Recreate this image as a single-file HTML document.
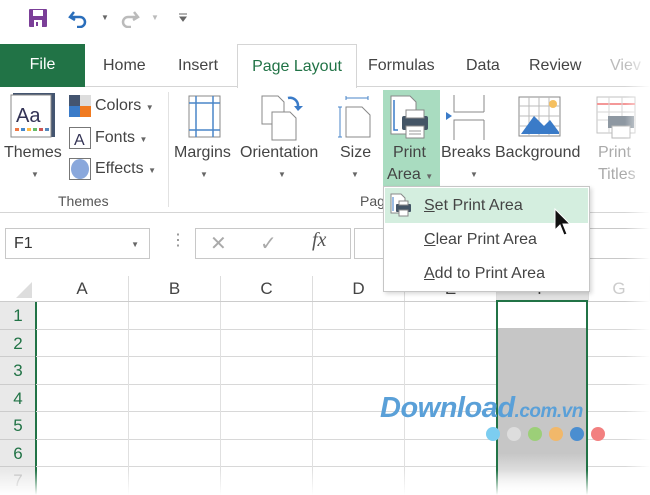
<!DOCTYPE html>
<html><head><meta charset="utf-8"><style>
*{margin:0;padding:0;box-sizing:border-box}
html,body{width:650px;height:495px;overflow:hidden}
body{background:#fff;font-family:"Liberation Sans",sans-serif;position:relative;color:#333}
.a{position:absolute;white-space:nowrap}
.t{font-size:16px;color:#444}
.l{font-size:16px;color:#444;text-align:center}
.arr{font-size:8px;color:#666}
.col{position:absolute;top:276px;height:26px;font-size:17px;color:#444;text-align:center;line-height:26px;border-right:1px solid #ddd;background:#fff}
.row{position:absolute;left:0;width:36px;font-size:17px;color:#555;text-align:center;background:#e9e9e9;border-bottom:1px solid #ccc}
.hl{position:absolute;left:36px;width:614px;height:1px;background:#d8d8d8}
.vl{position:absolute;width:1px;height:193px;background:#e0e0e0}
</style></head><body>
<svg class="a" style="left:28px;top:8px" width="20" height="20"><rect x="1" y="1" width="18" height="18" rx="1" fill="#7b3f98"/><rect x="5" y="2" width="10" height="6" fill="#fff"/><rect x="6" y="12" width="8" height="7" fill="#fff"/><rect x="8" y="14" width="2" height="4" fill="#7b3f98"/></svg>
<svg class="a" style="left:68px;top:8px" width="20" height="20"><path d="M6 4 L2 9 L7 12 M3 9 H12 A5 5 0 0 1 12 19 H9" fill="none" stroke="#2a6ebb" stroke-width="2.5"/></svg>
<span class="a arr" style="left:101px;top:13px">▼</span>
<svg class="a" style="left:120px;top:8px" width="20" height="20"><path d="M14 4 L18 9 L13 12 M17 9 H8 A5 5 0 0 0 8 19 H11" fill="none" stroke="#bbb" stroke-width="2.5"/></svg>
<span class="a arr" style="left:151px;top:13px;color:#bbb">▼</span>
<svg class="a" style="left:178px;top:12px" width="10" height="10"><path d="M1 2H9M2 5H8L5 9Z" fill="#666" stroke="#666"/></svg>
<div class="a" style="left:0;top:86px;width:650px;height:1px;background:#d5d5d5"></div>
<div class="a" style="left:0;top:44px;width:85px;height:43px;background:#217346;color:#fff;font-size:16px;text-align:center;line-height:42px">File</div>
<div class="a" style="left:237px;top:44px;width:120px;height:44px;border:1px solid #d5d5d5;border-bottom:none;background:#fff;color:#217346;font-size:16px;text-align:center;line-height:44px">Page Layout</div>
<span class="a t" style="left:103px;top:57px">Home</span>
<span class="a t" style="left:178px;top:57px">Insert</span>
<span class="a t" style="left:368px;top:57px">Formulas</span>
<span class="a t" style="left:466px;top:57px">Data</span>
<span class="a t" style="left:529px;top:57px">Review</span>
<span class="a t" style="left:610px;top:57px;color:#bbb">Viev</span>
<svg class="a" style="left:10px;top:92px" width="48" height="46"><rect x="3" y="1" width="42" height="44" fill="#445570"/><rect x="1" y="3" width="40" height="42" fill="#fff" stroke="#888"/><text x="6" y="30" font-size="20" fill="#335" font-family="Liberation Sans">Aa</text><g fill="#e74"><rect x="5" y="36" width="4" height="3"/><rect x="11" y="36" width="4" height="3" fill="#48c"/><rect x="17" y="36" width="4" height="3" fill="#fb4"/><rect x="23" y="36" width="4" height="3" fill="#6b6"/><rect x="29" y="36" width="4" height="3" fill="#c55"/><rect x="35" y="36" width="4" height="3" fill="#58b"/></g></svg>
<span class="a l" style="left:4px;top:144px">Themes</span>
<span class="a arr" style="left:31px;top:170px">▼</span>
<svg class="a" style="left:69px;top:95px" width="22" height="22"><rect x="0" y="0" width="11" height="11" fill="#445570"/><rect x="11" y="0" width="11" height="11" fill="#ddd"/><rect x="0" y="11" width="11" height="11" fill="#3a7bc8"/><rect x="11" y="11" width="11" height="11" fill="#f07a20"/></svg>
<span class="a t" style="left:95px;top:97px">Colors <span class="arr">▼</span></span>
<svg class="a" style="left:69px;top:127px" width="22" height="22"><rect x="0.5" y="0.5" width="21" height="21" fill="#fff" stroke="#777"/><text x="5" y="18" font-size="16" fill="#335" font-family="Liberation Sans">A</text></svg>
<span class="a t" style="left:95px;top:129px">Fonts <span class="arr">▼</span></span>
<svg class="a" style="left:69px;top:158px" width="22" height="22"><rect x="0.5" y="0.5" width="21" height="21" fill="#fff" stroke="#777"/><ellipse cx="11" cy="11" rx="9" ry="10" fill="#8aa8dc"/></svg>
<span class="a t" style="left:95px;top:160px">Effects <span class="arr">▼</span></span>
<span class="a" style="left:58px;top:193px;font-size:14px;color:#555">Themes</span>
<div class="a" style="left:168px;top:92px;width:1px;height:115px;background:#e2e2e2"></div>
<svg class="a" style="left:188px;top:95px" width="34" height="44"><rect x="1" y="1" width="31" height="41" fill="#fff" stroke="#888"/><path d="M8 1V42M25 1V42M1 8H32M1 35H32" stroke="#4a86c8" stroke-width="1.5"/></svg>
<span class="a l" style="left:174px;top:144px">Margins</span>
<span class="a arr" style="left:200px;top:170px">▼</span>
<svg class="a" style="left:260px;top:94px" width="46" height="48"><path d="M2 2H18L24 8V30H2Z" fill="#fff" stroke="#888"/><path d="M12 18H30L36 24V46H12Z" fill="#fff" stroke="#888"/><path d="M28 4 A8 8 0 0 1 38 12" fill="none" stroke="#3a7bc8" stroke-width="2.5"/><path d="M34 12 L38 17 L43 12Z" fill="#3a7bc8"/></svg>
<span class="a l" style="left:240px;top:144px">Orientation</span>
<span class="a arr" style="left:278px;top:170px">▼</span>
<svg class="a" style="left:338px;top:95px" width="36" height="44"><path d="M8 3H30M8 1V5M30 1V5M2 12V42M0 12H4M0 42H4" stroke="#4a86c8"/><path d="M8 12H24L32 20V42H8Z" fill="#fff" stroke="#888"/></svg>
<span class="a l" style="left:340px;top:144px">Size</span>
<span class="a arr" style="left:351px;top:170px">▼</span>
<div class="a" style="left:383px;top:90px;width:57px;height:96px;background:#a9dcc0"></div>
<svg class="a" style="left:388px;top:94px" width="46" height="46"><path d="M3 2H22L28 8V40H3Z" fill="#fff" stroke="#888"/><path d="M6 6V36H10" fill="none" stroke="#3a7bc8" stroke-width="1.5"/><rect x="14" y="22" width="26" height="14" rx="2" fill="#445566"/><rect x="18" y="16" width="18" height="8" fill="#fff" stroke="#888"/><rect x="18" y="32" width="18" height="12" fill="#fff" stroke="#888"/><path d="M21 37H33M21 40H33" stroke="#999"/></svg>
<span class="a l" style="left:393px;top:144px">Print</span>
<span class="a l" style="left:387px;top:166px">Area <span class="arr">▼</span></span>
<svg class="a" style="left:444px;top:94px" width="42" height="46"><path d="M10 1V18H40M10 46V26H40M40 1V18M40 26V46" fill="none" stroke="#888"/><path d="M2 18L8 22L2 26Z" fill="#3a7bc8"/></svg>
<span class="a l" style="left:441px;top:144px">Breaks</span>
<span class="a arr" style="left:470px;top:170px">▼</span>
<svg class="a" style="left:518px;top:96px" width="44" height="42"><rect x="1" y="1" width="41" height="39" fill="#fff" stroke="#888"/><path d="M1 10H42M1 20H42M1 30H42M11 1V40M21 1V40M31 1V40" stroke="#bbb"/><path d="M3 38L16 20L26 30L32 24L41 36V38Z" fill="#3a7bc8"/><circle cx="35" cy="8" r="4" fill="#f5c060"/></svg>
<span class="a l" style="left:495px;top:144px">Background</span>
<svg class="a" style="left:596px;top:96px" width="40" height="46" opacity="0.6"><rect x="1" y="1" width="38" height="36" fill="#fff" stroke="#999"/><path d="M1 8H39" stroke="#e55" stroke-width="2"/><path d="M1 16H39M1 24H39M13 1V37M26 1V37" stroke="#bbb"/><rect x="12" y="20" width="26" height="12" fill="#445566"/><rect x="16" y="30" width="18" height="12" fill="#fff" stroke="#888"/></svg>
<span class="a l" style="left:598px;top:144px;color:#aaa">Print</span>
<span class="a l" style="left:598px;top:166px;color:#aaa">Titles</span>
<span class="a" style="left:360px;top:193px;font-size:14px;color:#555">Pag</span>
<div class="a" style="left:0;top:212px;width:650px;height:1px;background:#d5d5d5"></div>
<div class="a" style="left:5px;top:228px;width:145px;height:31px;border:1px solid #c8c8c8;font-size:16px;color:#333;padding:6px 0 0 8px">F1<span class="arr" style="position:absolute;right:10px;top:11px">▼</span></div>
<span class="a" style="left:170px;top:230px;color:#888;font-size:16px">⋮</span>
<div class="a" style="left:195px;top:228px;width:156px;height:31px;border:1px solid #c8c8c8"></div>
<span class="a" style="left:210px;top:231px;font-size:20px;color:#aaa">✕</span>
<span class="a" style="left:260px;top:231px;font-size:20px;color:#aaa">✓</span>
<span class="a" style="left:312px;top:229px;font-size:20px;font-family:'Liberation Serif',serif;font-style:italic;color:#555">fx</span>
<div class="a" style="left:354px;top:228px;width:296px;height:31px;border:1px solid #c8c8c8;border-right:none"></div>
<div class="a" style="left:0;top:276px;width:36px;height:26px;background:#fff"></div>
<svg class="a" style="left:10px;top:280px" width="24" height="20"><path d="M22 2V18H6Z" fill="#ddd"/></svg>
<div class="col" style="left:36px;width:93px">A</div>
<div class="col" style="left:129px;width:92px">B</div>
<div class="col" style="left:221px;width:92px">C</div>
<div class="col" style="left:313px;width:92px">D</div>
<div class="col" style="left:405px;width:92px">E</div>
<div class="col" style="left:497px;width:92px;background:#e2e2e2">F</div>
<div class="col" style="left:589px;width:61px;color:#ccc">G</div>
<div class="a" style="left:0;top:301px;width:650px;height:1px;background:#ccc"></div>
<div class="row" style="top:302px;height:28px;line-height:28px;color:#217346">1</div>
<div class="row" style="top:330px;height:27px;line-height:27px;color:#217346">2</div>
<div class="row" style="top:357px;height:28px;line-height:28px;color:#217346">3</div>
<div class="row" style="top:385px;height:27px;line-height:27px;color:#217346">4</div>
<div class="row" style="top:412px;height:28px;line-height:28px;color:#217346">5</div>
<div class="row" style="top:440px;height:27px;line-height:27px;color:#217346">6</div>
<div class="row" style="top:467px;height:28px;line-height:28px;color:#bbb">7</div>
<div class="a" style="left:35px;top:302px;width:2px;height:193px;background:#217346"></div>
<div class="hl" style="top:329px"></div><div class="hl" style="top:356px"></div><div class="hl" style="top:384px"></div><div class="hl" style="top:411px"></div><div class="hl" style="top:439px"></div><div class="hl" style="top:466px"></div>
<div class="vl" style="left:128px;top:302px"></div><div class="vl" style="left:220px;top:302px"></div><div class="vl" style="left:312px;top:302px"></div><div class="vl" style="left:404px;top:302px"></div>
<div class="a" style="left:498px;top:328px;width:89px;height:167px;background:linear-gradient(#c6c6c6 75%,#fff)"></div>
<div class="a" style="left:496px;top:300px;width:92px;height:195px;border:2px solid #217346;border-bottom:none"></div>
<span class="a" style="left:380px;top:392px;font-size:29px;font-weight:bold;font-style:italic;color:#5aa0d8;letter-spacing:-0.5px">Download<span style="font-size:19px">.com.vn</span></span>
<svg class="a" style="left:485px;top:425px" width="125" height="18"><circle cx="8" cy="9" r="7" fill="#7ccdf0"/><circle cx="29" cy="9" r="7" fill="#ddd"/><circle cx="50" cy="9" r="7" fill="#9ccf78"/><circle cx="71" cy="9" r="7" fill="#f1b86a"/><circle cx="92" cy="9" r="7" fill="#4a8ed0"/><circle cx="113" cy="9" r="7" fill="#f28080"/></svg>
<div class="a" style="left:0;top:470px;width:650px;height:25px;background:linear-gradient(rgba(255,255,255,0),#fff)"></div>
<div class="a" style="left:625px;top:0;width:25px;height:495px;background:linear-gradient(90deg,rgba(255,255,255,0),#fff)"></div>
<div class="a" style="left:383px;top:186px;width:207px;height:106px;background:#fff;border:1px solid #c6c6c6;box-shadow:2px 2px 4px rgba(0,0,0,0.15)"></div>
<div class="a" style="left:385px;top:188px;width:203px;height:35px;background:#d4eedf"></div>
<svg class="a" style="left:389px;top:193px" width="24" height="24"><path d="M2 1H12L16 5V20H2Z" fill="#fff" stroke="#888"/><path d="M4 4V18" stroke="#3a7bc8"/><rect x="7" y="11" width="15" height="8" rx="1" fill="#445566"/><rect x="10" y="8" width="9" height="4" fill="#fff" stroke="#888"/><rect x="10" y="17" width="9" height="6" fill="#fff" stroke="#888"/></svg>
<span class="a t" style="left:424px;top:197px"><u>S</u>et Print Area</span>
<span class="a t" style="left:424px;top:231px"><u>C</u>lear Print Area</span>
<span class="a t" style="left:424px;top:265px"><u>A</u>dd to Print Area</span>
<svg class="a" style="left:554px;top:208px" width="20" height="30"><path d="M1 1V22L6 17L10 27L13 26L9 16H16Z" fill="#111" stroke="#fff"/></svg>
</body></html>
